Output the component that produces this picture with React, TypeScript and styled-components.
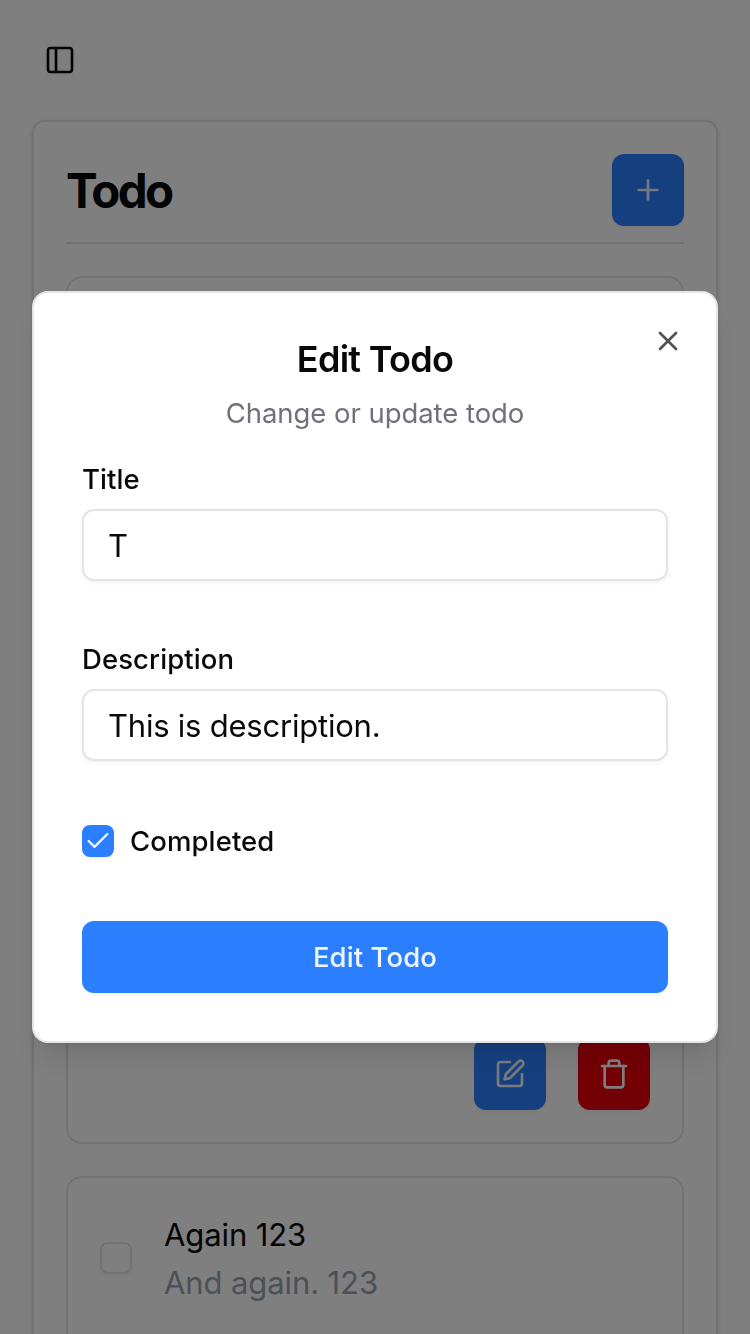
import React from "react";
import styled, { createGlobalStyle, css } from "styled-components";
import { Check, PanelLeft, Plus, SquarePen, Trash, X } from "lucide-react";

const color = {
  text: "#09090b",
  muted: "#71717b",
  subtle: "#99a1af",
  border: "#e4e4e7",
  primary: "#2b7fff",
  onPrimary: "#eff6ff",
  danger: "#e7000b",
};

const shadowXs = "0 2px 4px rgba(0, 0, 0, 0.05)";

const GlobalStyle = createGlobalStyle`
  *, *::before, *::after { box-sizing: border-box; }
  html, body { margin: 0; height: 100%; overflow: hidden; background: #fff; }
  body {
    color: ${color.text};
    font-family: Inter, "Liberation Sans", sans-serif;
    -webkit-font-smoothing: antialiased;
  }
  h1, h2, p { margin: 0; }
  button, input { font: inherit; color: inherit; }
`;

const Page = styled.div`
  height: 1334px;
  overflow: hidden;
`;

const TopBar = styled.header`
  display: flex;
  align-items: center;
  height: 120px;
  padding: 0 32px;
`;

const SidebarToggle = styled.button`
  display: grid;
  place-items: center;
  width: 56px;
  height: 56px;
  padding: 0;
  border: 0;
  background: none;
`;

const Card = styled.main`
  display: flex;
  flex-direction: column;
  gap: 32px;
  margin: 0 32px;
  padding: 32px;
  min-height: 1400px;
  border: 2px solid ${color.border};
  border-radius: 12px;
  box-shadow: 0 2px 6px rgba(0, 0, 0, 0.1), 0 2px 4px -2px rgba(0, 0, 0, 0.1);
`;

const CardHeader = styled.div`
  display: flex;
  align-items: center;
  justify-content: space-between;
  padding-bottom: 16px;
  border-bottom: 2px solid ${color.border};
`;

const Heading = styled.h1`
  padding-top: 2px;
  font-size: 47.5px;
  line-height: 64px;
  font-weight: 700;
  letter-spacing: -2.7px;
`;

const IconButton = styled.button<{ $danger?: boolean }>`
  display: grid;
  place-items: center;
  width: 72px;
  height: 72px;
  padding: 0;
  border: 0;
  border-radius: 12px;
  color: ${(p) => (p.$danger ? "#fff" : color.onPrimary)};
  background: ${(p) => (p.$danger ? color.danger : color.primary)};
  box-shadow: ${shadowXs};
`;

const Item = styled.article<{ $height?: number }>`
  display: flex;
  flex-direction: column;
  justify-content: space-between;
  height: ${(p) => (p.$height ? `${p.$height}px` : "auto")};
  padding: 32px;
  border: 2px solid ${color.border};
  border-radius: 16px;
`;

const ItemRow = styled.div`
  display: flex;
  align-items: center;
  height: 96px;
  gap: 32px;
`;

const ItemText = styled.div`
  padding-top: 2px;
  font-size: 31px;
  line-height: 48px;
`;

const ItemTitle = styled.p`
  letter-spacing: -0.1px;
`;

const ItemDescription = styled.p`
  color: ${color.subtle};
  letter-spacing: -0.1px;
`;

const Actions = styled.div`
  display: flex;
  justify-content: flex-end;
  gap: 32px;
`;

const Checkbox = styled.span<{ $checked?: boolean }>`
  display: grid;
  place-items: center;
  flex: none;
  width: 32px;
  height: 32px;
  border: 2px solid ${color.border};
  border-radius: 8px;
  box-shadow: ${shadowXs};
  ${(p) =>
    p.$checked &&
    css`
      border-color: ${color.primary};
      background: ${color.primary};
      color: ${color.onPrimary};
    `}
`;

const Overlay = styled.div`
  position: fixed;
  inset: 0;
  display: flex;
  align-items: center;
  padding: 0 32px;
  background: rgba(0, 0, 0, 0.5);
`;

const Dialog = styled.section`
  position: relative;
  display: flex;
  flex-direction: column;
  gap: 32px;
  width: 100%;
  padding: 48px;
  border: 2px solid ${color.border};
  border-radius: 16px;
  background: #fff;
  box-shadow: 0 20px 30px -6px rgba(0, 0, 0, 0.1), 0 8px 12px -8px rgba(0, 0, 0, 0.1);
`;

const CloseButton = styled.button`
  position: absolute;
  top: 32px;
  right: 32px;
  display: flex;
  padding: 0;
  border: 0;
  background: none;
  opacity: 0.7;
`;

const DialogHeader = styled.div`
  display: flex;
  flex-direction: column;
  gap: 16px;
  text-align: center;
`;

const DialogTitle = styled.h2`
  font-size: 36px;
  line-height: 36px;
  font-weight: 600;
  letter-spacing: -0.7px;
`;

const DialogDescription = styled.p`
  color: ${color.muted};
  font-size: 27.5px;
  line-height: 40px;
  letter-spacing: -0.05px;
`;

const Form = styled.div`
  display: flex;
  flex-direction: column;
  gap: 64px;
`;

const Field = styled.div`
  display: flex;
  flex-direction: column;
  gap: 16px;
`;

const CheckField = styled.div`
  display: flex;
  align-items: center;
  gap: 16px;
`;

const Label = styled.label`
  font-size: 27.5px;
  line-height: 28px;
  font-weight: 500;
  letter-spacing: 0.1px;
`;

const Input = styled.input`
  width: 100%;
  height: 72px;
  padding: 2px 24px;
  border: 2px solid ${color.border};
  border-radius: 12px;
  outline: 0;
  background: transparent;
  box-shadow: ${shadowXs};
  font-size: 31px;
  letter-spacing: -0.22px;
`;

const SubmitButton = styled.button`
  height: 72px;
  padding: 0;
  border: 0;
  border-radius: 12px;
  background: ${color.primary};
  color: ${color.onPrimary};
  box-shadow: ${shadowXs};
  font-size: 27.5px;
  font-weight: 500;
  letter-spacing: 0.1px;
`;

export default function App() {
  return (
    <>
      <GlobalStyle />
      <Page>
        <TopBar>
          <SidebarToggle aria-label="Toggle sidebar">
            <PanelLeft size={32} />
          </SidebarToggle>
        </TopBar>
        <Card>
          <CardHeader>
            <Heading>Todo</Heading>
            <IconButton aria-label="Add">
              <Plus size={32} />
            </IconButton>
          </CardHeader>
          <Item $height={868}>
            <ItemRow />
            <Actions>
              <IconButton aria-label="Edit">
                <SquarePen size={32} />
              </IconButton>
              <IconButton $danger aria-label="Delete">
                <Trash size={32} />
              </IconButton>
            </Actions>
          </Item>
          <Item $height={400}>
            <ItemRow>
              <Checkbox />
              <ItemText>
                <ItemTitle>Again 123</ItemTitle>
                <ItemDescription>And again. 123</ItemDescription>
              </ItemText>
            </ItemRow>
          </Item>
        </Card>
      </Page>
      <Overlay>
        <Dialog role="dialog">
          <DialogHeader>
            <DialogTitle>Edit Todo</DialogTitle>
            <DialogDescription>Change or update todo</DialogDescription>
          </DialogHeader>
          <Form>
            <Field>
              <Label>Title</Label>
              <Input defaultValue="T" />
            </Field>
            <Field>
              <Label>Description</Label>
              <Input defaultValue="This is description." />
            </Field>
            <CheckField>
              <Checkbox $checked>
                <Check size={28} />
              </Checkbox>
              <Label>Completed</Label>
            </CheckField>
            <SubmitButton>Edit Todo</SubmitButton>
          </Form>
          <CloseButton aria-label="Close">
            <X size={32} />
          </CloseButton>
        </Dialog>
      </Overlay>
    </>
  );
}
